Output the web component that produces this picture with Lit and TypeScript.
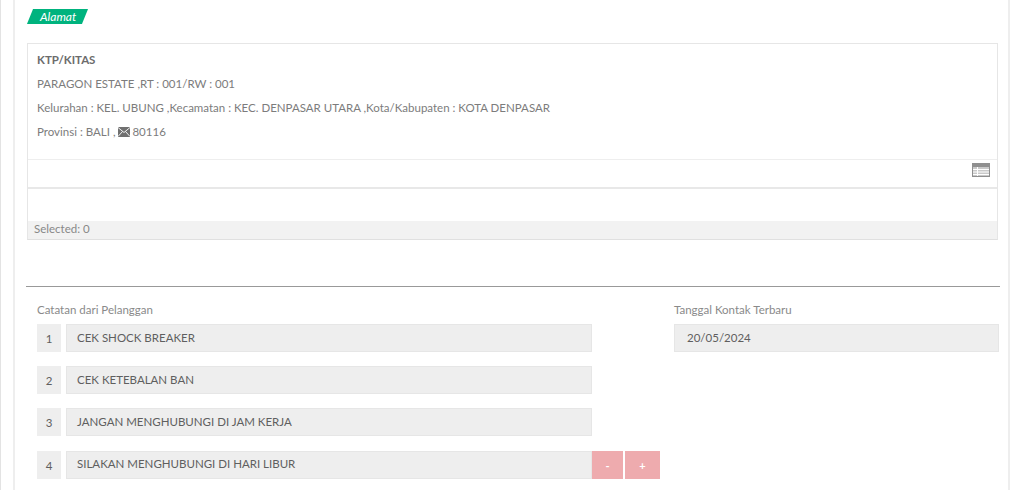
import { LitElement, html, css } from "lit";
import { customElement } from "lit/decorators.js";

const NOTES = ["CEK SHOCK BREAKER", "CEK KETEBALAN BAN", "JANGAN MENGHUBUNGI DI JAM KERJA", "SILAKAN MENGHUBUNGI DI HARI LIBUR"];

@customElement("app-root")
export class AppRoot extends LitElement {
  static styles = css`
    :host { display: block; height: 490px; overflow: hidden; background: #fff; font-family: Lato, "Open Sans", sans-serif; font-size: 11.5px; color: #7c7c7c; }
    * { box-sizing: border-box; }
    .outer { height: 490px; border-left: 1px solid #e3e3e3; padding-left: 12px; }
    .panel { width: 997px; height: 490px; border-left: 2px solid #eee; border-right: 2px solid #eee; padding: 9px 10px 0 12px; }
    .tag { width: 55px; height: 15px; background: #00b37e; transform: skewX(-22deg); margin-left: 3px; margin-bottom: 19px; display: flex; align-items: center; justify-content: center; }
    .tag span { color: #fff; font-style: italic; font-size: 12px; transform: skewX(22deg); line-height: 15px; padding-left: 1px; }
    .grid { width: 971px; height: 197px; border: 1px solid #e6e6e6; border-bottom-color: #e0e0e0; display: flex; flex-direction: column; }
    .cell { height: 116px; padding: 4px 9px; border-bottom: 1px solid #eee; }
    .cell div { height: 24px; line-height: 24px; white-space: nowrap; }
    .cell b { color: #6c6c6c; font-weight: 700; }
    .mail { vertical-align: -1px; margin: 0 2px 0 0; }
    .tools { height: 29px; border-bottom: 2px solid #e8e8e8; display: flex; justify-content: flex-end; align-items: flex-start; padding: 3px 7px 0 0; }
    .tools svg { display: block; }
    .body { flex: 1; }
    .foot { height: 18px; background: #f2f2f2; color: #888; padding-left: 6px; line-height: 16px; }
    .rule { height: 1px; background: #999; margin: 46px 0 0 -1px; width: 974px; }
    .form { display: flex; margin-top: 14px; width: 973px; }
    .left { width: 647px; padding-left: 10px; }
    .right { width: 325px; }
    .lab { height: 17px; line-height: 17px; color: #8a8a8a; margin-bottom: 6px; }
    .row { display: flex; height: 28px; margin-bottom: 14px; color: #5f5f5f; }
    .row.last { margin-top: 15px; }
    .row.last .inp { line-height: 24px; }
    .num { width: 24px; background: #eee; margin-right: 5px; display: flex; align-items: center; justify-content: center; }
    .inp { background: #eee; border: 1px solid #e6e6e6; padding-left: 10px; line-height: 26px; white-space: nowrap; }
    .w { width: 526px; }
    .date { width: 100%; padding-left: 12px; }
    .btn { width: 31px; background: #eeabae; color: #fff; display: flex; align-items: center; justify-content: center; margin-right: 2px; font-weight: 700; font-size: 11px; }
    .btn + .btn { width: 35px; margin: 0; }
  `;

  render() {
    return html`<div class="outer"><div class="panel">
      <div class="tag"><span>Alamat</span></div>
      <div class="grid">
        <div class="cell">
          <div><b>KTP/KITAS</b></div>
          <div>PARAGON ESTATE ,RT : 001/RW : 001</div>
          <div>Kelurahan : KEL. UBUNG ,Kecamatan : KEC. DENPASAR UTARA ,Kota/Kabupaten : KOTA DENPASAR</div>
          <div>Provinsi : BALI , <svg class="mail" width="12" height="10" viewBox="0 0 12 10"><rect width="12" height="10" fill="#707070"/><path d="M0 .5 6 5.5 12 .5M0 9.5 4.5 4.5M12 9.5 7.5 4.5" fill="none" stroke="#fff" stroke-width=".9"/></svg>80116</div>
        </div>
        <div class="tools">
          <svg width="18" height="14" viewBox="0 0 18 14"><rect width="18" height="14" fill="#8f8f8f"/><rect x="1" y="4" width="16" height="9" fill="#c9c9c9"/><path d="M1 6.5h16M1 9h16M1 11.5h16" stroke="#fff"/><path d="M5.5 4v9" stroke="#fff"/></svg>
        </div>
        <div class="body"></div>
        <div class="foot">Selected: 0</div>
      </div>
      <div class="rule"></div>
      <div class="form">
        <div class="left">
          <div class="lab">Catatan dari Pelanggan</div>
          ${NOTES.map((n, i) => html`<div class="row ${i === 3 ? "last" : ""}">
            <div class="num">${i + 1}</div>
            <div class="inp w">${n}</div>
            ${i === 3 ? html`<div class="btn">-</div><div class="btn">+</div>` : ""}
          </div>`)}
        </div>
        <div class="right">
          <div class="lab">Tanggal Kontak Terbaru</div>
          <div class="row"><div class="inp date">20/05/2024</div></div>
        </div>
      </div>
    </div></div>`;
  }
}
